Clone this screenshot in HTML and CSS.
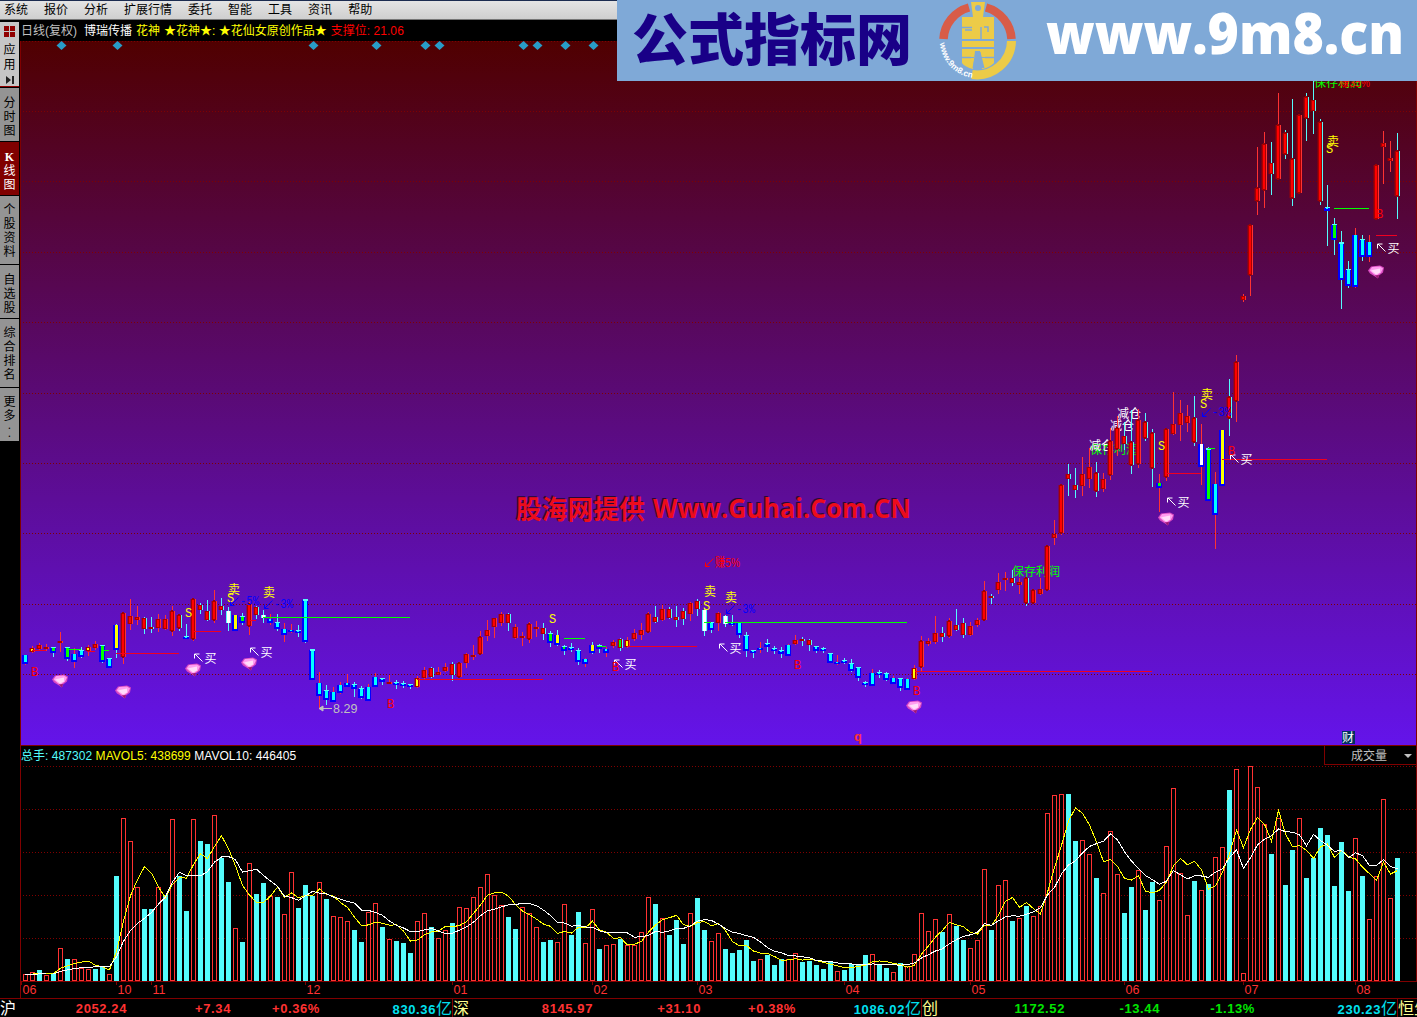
FILE: index.html
```
<!DOCTYPE html>
<html lang="zh-CN">
<head>
<meta charset="utf-8">
<title>博瑞传播 日线</title>
<link rel="stylesheet" href="styles.css">
</head>
<body>
<div class="menu">
<span>系统</span><span>报价</span><span>分析</span><span>扩展行情</span><span>委托</span><span>智能</span><span>工具</span><span>资讯</span><span>帮助</span>
</div>

<div class="work">
<div class="side">
<div class="tab apps">
<svg width="11" height="11"><path d="M0 0h5v5H0zM6 0h5v5H6zM0 6h5v5H0zM6 6h5v5H6z" fill="#900000"/></svg>
<span>应</span><span>用</span>
<svg class="next" width="8" height="8"><path d="M0 0L5 4L0 8zM6 0h2v8H6z" fill="#222"/></svg>
</div>
<div class="tab t3"><span>分</span><span>时</span><span>图</span></div>
<div class="tab t3 on"><span class="k">K</span><span>线</span><span>图</span></div>
<div class="tab t4"><span>个</span><span>股</span><span>资</span><span>料</span></div>
<div class="tab t3"><span>自</span><span>选</span><span>股</span></div>
<div class="tab t4"><span>综</span><span>合</span><span>排</span><span>名</span></div>
<div class="tab more"><span>更</span><span>多</span><i>.</i><i>.</i></div>
</div>

<div class="charts">
<div class="info"><span class="grey">日线(复权)</span><span class="white">博瑞传播</span><span class="yellow">花神</span><span class="yellow">★花神★: ★花仙女原创作品★</span><span class="red">支撑位: <b>21.06</b></span></div>
<svg class="price" id="price" width="1397" height="704" viewBox="20 41 1397 704"></svg>
<div class="volhead">
<div><span class="cyan">总手: 487302</span> <span class="yellow">MAVOL5: 438699</span> <span class="white">MAVOL10: 446405</span></div>
<div class="pick">成交量<svg width="9" height="5"><path d="M0 0h8L4 4z" fill="#c0c0c0"/></svg></div>
</div>
<svg class="vol" id="vol" width="1397" height="233" viewBox="20 765 1397 233"></svg>
</div>
</div>

<div class="status">
<div class="sec hu"><span class="name">沪</span><span>2052.24</span><span>+7.34</span><span>+0.36%</span><span class="sum">830.36<em>亿</em></span></div>
<div class="sec shen"><span class="name">深</span><span>8145.97</span><span>+31.10</span><span>+0.38%</span><span class="sum">1086.02<em>亿</em></span></div>
<div class="sec chuang"><span class="name">创</span><span>1172.52</span><span>-13.44</span><span>-1.13%</span><span class="sum">230.23<em>亿</em></span></div>
<div class="sec"><span class="name">恒生</span></div>
</div>

<div class="banner">
<svg width="800" height="81" viewBox="617 0 800 81">
<text class="brand" x="632" y="60" textLength="280">公式指标网</text>
<path d="M943.500 39A34.500 34.500 0 0 1 969 7.500" fill="none" stroke="#d85c48" stroke-width="8.500"/>
<path d="M986 7.500A34.500 34.500 0 0 1 1011.500 39" fill="none" stroke="#d85c48" stroke-width="8.500"/>
<path d="M1011.500 41A34.500 34.500 0 0 1 972 74.500" fill="none" stroke="#eccb48" stroke-width="9"/>
<path d="M971 2h14l-2 15h11v22h-32V17h11z" fill="#eccb48"/>
<path d="M962 41h32v6h-32zM962 49h32v8h-32zM962 58h32l0 5q-5 5-12 6l-2-18h-5l-2 18q-8-2-11-6z" fill="#eccb48"/>
<circle cx="978" cy="8" r="3" fill="#7fa9d7"/>
<path d="M962 27.500h10M972 30h-7M981 27v12M984 27h4v5M962 48h10M984 48h10M962 57.500h9M985 57.500h9" fill="none" stroke="#7fa9d7" stroke-width="1.500"/>
<path d="M972.500 68l3-16h5l4 16z" fill="#7fa9d7"/>
<path id="arc" d="M940 43A38 38 0 0 0 973 78" fill="none"/>
<text class="ring"><textPath href="#arc">www.9m8.cn</textPath></text>
<text class="site" x="1046" y="54" textLength="358" lengthAdjust="spacingAndGlyphs">www.9m8.cn</text>
</svg>
</div>
<script src="chart.js"></script>
</body>
</html>
```
FILE: styles.css
```
*{box-sizing: border-box;}
body{
	margin: 0;
	width: 1417px;
	height: 1017px;
	overflow: hidden;
	position: relative;
	background: #000;
	font: 12px/14px "Liberation Sans", "Noto Sans CJK SC", sans-serif;
}
.menu{
	height: 20px;
	display: flex;
	gap: 16px;
	padding: 2px 0 0 4px;
	border-top: 1px solid #1c2c50;
	border-bottom: 1px solid #777;
	background: linear-gradient(#e4e4e4, #cfcfcf);
	color: #000;
}
.work{
	height: 978px;
	display: flex;
}
.side{
	width: 20px;
	padding-top: 2px;
}
.tab{
	width: 19px;
	margin-bottom: 1px;
	background: #949494;
	display: flex;
	flex-direction: column;
	align-items: center;
	color: #000;
	line-height: 14px;
}
.tab i{
	font-style: normal;
	line-height: 8px;
}
.apps{
	height: 65px;
	background: #c6c6c6;
	border-bottom: 1px solid #900000;
	padding-top: 4px;
}
.apps svg{margin-bottom: 6px; flex: none;}
.apps span{line-height: 15px;}
.apps .next{margin-top: 3px;}
.t3{height: 53px; padding-top: 8px;}
.t4{height: 68px; padding-top: 7px;}
.more{height: 53px; padding-top: 7px;}
.more i{margin-top: -2px; margin-bottom: 2px;}
.on{background: #800000; color: #fff;}
.k{font-family: "Liberation Serif", serif; font-weight: bold;}
.charts{
	width: 1397px;
	border-top: 1px solid #000;
}
.info{
	height: 20px;
	padding: 3px 0 0 1px;
	display: flex;
	white-space: nowrap;
}
.info span{margin-right: 4px;}
.info .grey{width: 59px;}
.info b{font-weight: normal; letter-spacing: .1px;}
.price, .vol{display: block;}
.grey{color: #c0c0c0;}
.white{color: #fff;}
.yellow{color: #ff0;}
.red{color: #f00;}
.cyan{color: #54fcfc;}
.volhead{
	height: 20px;
	display: flex;
	justify-content: space-between;
	border-top: 1px solid #800000;
	border-left: 1px solid #800000;
	line-height: 20px;
	letter-spacing: .05px;
}
.pick{
	width: 93px;
	height: 19px;
	padding: 2px 3px 0 26px;
	display: flex;
	align-items: center;
	justify-content: space-between;
	border: solid #800000;
	border-width: 0 1px 1px 1px;
	color: #c0c0c0;
}
.status{
	height: 19px;
	border-top: 1px solid #800000;
	display: flex;
	font-weight: bold;
	font-size: 13px;
	line-height: 20px;
	letter-spacing: .6px;
	color: #ff3232;
	white-space: nowrap;
}
.sec{
	flex: none;
	display: grid;
	text-align: right;
	border-right: 1px solid #800000;
}
.hu{width: 453px; grid-template-columns: 16px 111px 104px 89px 132px;}
.shen{width: 469px; grid-template-columns: 16px 124px 108px 95px 125px;}
.chuang{width: 476px; grid-template-columns: 16px 127px 95px 95px 142px; color: #00e600;}
.name, .status em{
	font-weight: normal;
	font-style: normal;
	font-size: 16px;
	line-height: 19px;
	letter-spacing: 0;
	color: #ffff90;
}
.hu .name{color: #fff;}
.status em{color: #00e0f0;}
.sum{color: #00e0f0;}
.banner{
	position: absolute;
	left: 617px;
	top: 0;
	width: 800px;
	height: 81px;
	background: #7fa9d7;
}
.brand{
	font: 900 56px "Noto Sans CJK SC", sans-serif;
	fill: #190087;
}
.site{
	font: 800 56px "Open Sans", sans-serif;
	fill: #fff;
}
.ring{
	font: bold 8.5px "Liberation Sans", sans-serif;
	fill: #fff;
}

/* chart svg */
.grid{stroke: #800000; stroke-dasharray: 1 2;}
.frame{stroke: #800000; fill: none;}
.ma{fill: none; stroke-width: 1;}
.month{font-size: 12.5px;}
.note{font-size: 12px;}
.sig{font: 12px "Liberation Mono", monospace;}
.heavy{font: bold 13px "Liberation Mono", monospace;}
.mark{font: bold 26px "Open Sans", "Noto Sans CJK SC", sans-serif;}
```
FILE: chart.js
```
var STEP=7, LEFT=23;
var RED='#ff3232', CYAN='#54fcfc';

// candles: type, body top, body bottom, high, low
// r/c red body (red/cyan wick), b/d blue body (cyan/red wick), y/o yellow, g/j/h green, w/v white
var k='d655,664,655,665 o648,652,646,653 r645,649,643,650 r647,649,644,651 g648,653,647,657 o641,643,632,652 g648,659,647,661 d654,662,648,668 b651,657,647,658 o647,651,645,656 '+
'r644,648,641,650 g646,662,645,663 b659,668,659,668 y625,650,624,658 r613,657,612,664 r616,624,599,630 r617,620,606,625 c618,629,617,634 c627,629,617,633 r619,628,614,632 '+
'r619,629,615,630 r611,631,606,636 c615,628,614,631 b637,638,624,638 r599,639,599,641 c605,610,603,614 c611,620,600,621 r601,620,590,623 c606,610,598,615 w611,623,607,631 '+
'y615,631,615,631 g617,623,613,625 r604,626,602,635 c607,615,606,619 w615,618,610,623 d619,623,614,625 b623,629,614,631 d629,635,623,642 d630,632,624,633 b631,633,625,637 '+
'b600,642,600,643 b650,680,650,680 d683,696,672,709 b691,700,685,705 d692,702,687,702 d685,693,682,694 d683,687,674,687 b685,689,682,697 b689,698,686,699 d687,701,684,701 '+
'd677,687,673,687 b679,682,678,685 r682,684,675,684 b683,685,680,689 b684,686,681,688 b685,687,684,689 o678,687,676,688 r670,678,667,679 c668,677,667,678 r672,675,667,675 '+
'r667,671,663,672 c664,675,662,681 r663,677,663,678 r654,663,653,668 r655,657,645,660 r637,654,631,654 r630,636,620,641 r618,627,618,638 r614,623,612,626 c614,623,613,631 '+
'r627,638,624,639 r636,637,632,646 r624,639,622,643 r627,629,621,637 c628,634,623,640 g634,643,631,647 y635,645,630,646 g647,651,645,655 b648,650,643,652 b651,662,648,665 '+
'd659,664,658,667 y645,653,642,654 g646,649,644,653 d649,653,647,657 r642,646,640,648 h639,648,638,651 o640,647,637,648 r633,639,629,641 r630,635,623,640 r614,632,612,633 '+
'c617,622,606,623 r609,620,605,621 c609,618,607,619 c617,620,606,627 c611,619,608,625 r603,614,602,621 c601,609,599,616 w610,631,608,636 b623,630,622,633 r613,623,612,631 '+
'w616,624,615,627 b623,625,615,626 b623,635,623,638 b636,651,632,657 b651,653,650,658 d648,650,642,653 b644,647,639,652 b649,650,646,654 b651,654,647,658 d645,656,644,656 '+
'r640,644,635,645 c639,641,637,646 c640,645,639,651 b647,651,646,653 b649,651,647,653 b654,663,653,663 d662,663,655,665 b661,663,658,664 b664,671,659,672 b668,678,667,681 '+
'b683,685,681,687 d673,686,669,686 b673,675,670,678 b674,680,672,681 d678,684,676,684 b679,688,678,691 d679,690,678,690 o668,679,665,680 r641,667,636,671 r641,644,638,646 '+
'r633,642,616,644 c633,637,627,642 r621,636,618,638 c625,630,609,631 c623,635,618,638 r626,635,622,636 r620,625,618,627 r591,620,581,621 c596,598,594,604 r582,590,573,594 '+
'r578,579,572,591 c578,583,570,586 r582,585,578,594 c578,603,577,606 r590,603,589,604 r589,594,578,595 r546,590,545,590 r534,538,520,545 r485,533,485,535 c474,479,464,496 '+
'c485,490,468,498 r474,486,457,496 r467,479,448,488 c473,491,462,497 r479,489,473,492 r441,475,428,480 r428,449,416,456 c436,444,422,450 c442,465,410,474 r420,464,409,468 '+
'c422,438,413,441 c433,468,429,487 j483,488,474,512 r429,477,429,481 r424,434,392,435 r413,425,400,441 r416,423,405,432 c418,442,396,446 v444,467,424,485 g449,501,447,501 '+
'd484,515,472,549 y430,486,430,486 c397,418,379,436 r362,401,355,422 r296,300,294,302 r225,275,225,296 r188,201,147,215 r144,190,132,208 c163,174,142,195 r125,179,93,179 '+
'c133,154,130,159 c159,198,99,206 r115,193,115,193 c97,118,93,141 c100,111,81,134 c122,201,119,205 b208,211,185,246 g225,240,218,255 b243,280,231,309 b270,286,261,288 '+
'd235,287,228,288 b240,257,235,261 d242,257,235,262 r165,219,165,219 r143,147,131,184 r158,161,141,172 c151,196,133,219';

// volumes, a trailing + is an up day
var v='7+ 9+ 11 6+ 7 33+ 22 22+ 13+ 12+ 12 14 7+ 105 163+ 140+ 94+ 72 72 94+ 86 162+ 105 70 162+ 140 137 166+ 123 99 53+ 39 118+ 87 98 85+ 84 67+ 109+ 73 96 85 99+ 82 65+ 64+ 60+ 51 39 69+ 78+ 54 42+ 40 38 28 60+ 68+ 54 43+ 51+ 58 74+ 73+ 84+ 94+ 107+ '+
'86+ 76+ 64 52 74+ 68+ 54+ 39 41 39+ 77+ 46 69 38+ 72+ 32 36+ 37+ 42 36+ 36+ 49+ 84+ 77 63+ 46 61 37 68+ 83 51 40+ 48+ 32 28 31 41 20 22+ 26 16 22 22+ 28+ 19 20 16 12 20 10+ 11 17 17 26 27+ 16 13 9+ 18 15+ 27+ 68+ 50+ 62+ 49 '+
'67+ 55 41 33+ 41+ 112+ 51 96+ 101+ 60 63+ 75 65+ 75+ 168+ 186+ 187+ 187 140 141+ 127+ 103 88+ 150+ 107+ 68 94 111+ 71 99 81+ 135+ 193+ 108+ 66+ 100 91+ 97 124+ 134+ 191 212+ 8+ 215+ 194+ 157+ 127 163+ 96 131 163+ 103 123 153 146 95 139 90 143+ 105 62+ 105+ 182+ 83+ 123';

function rect(x,y,w,h,fill,more){
	return '<rect x="'+x+'" y="'+y+'" width="'+w+'" height="'+h+'" fill="'+fill+'" '+(more||'')+'/>';
}
function line(x1,y1,x2,y2,c){
	return '<path d="M'+x1+' '+y1+'L'+x2+' '+y2+'" stroke="'+c+'" fill="none"/>';
}
function text(x,y,s,c,cls,len){
	return '<text x="'+x+'" y="'+y+'" fill="'+c+'" class="'+(cls||'note')+'"'+(len?' textLength="'+len+'" lengthAdjust="spacingAndGlyphs"':'')+'>'+s+'</text>';
}
function grid(ys){
	return ys.map(function(y){
		return '<path class="grid" d="M23 '+(y+.5)+'H1416"/>';
	}).join('');
}

var body={r:'#f00',c:'#f00',b:'#00ffff',d:'#00ffff',y:'#ff0',o:'#ff0',g:'#0f0',j:'#0f0',h:'#0f0',w:'#fff',v:'#fff'};
function candle(s,i){
	var t=s[0], n=s.slice(1).split(',').map(Number);
	var x=LEFT+STEP*i, h=Math.max(n[1]-n[0],2);
	var wick='rdovj'.indexOf(t)>=0?RED:CYAN;
	var out=rect(x+2,n[2],1,Math.max(n[3]-n[2],1),wick);
	if('rcoh'.indexOf(t)>=0){
		out+=rect(x+4,n[0],1,h,wick);
		out+=rect(x-.4,n[0],4.4,h,'#a80000');
		if(h>12) out+=rect(x+1,n[0]-1,2,h+2,'#a00000');
		out+=rect(x+1,n[0]+1,2,Math.max(h-2,0),t=='o'||t=='h'?body[t]:'#f00');
	}else if(t=='w'){
		out+=rect(x,n[0],5,h,CYAN)+rect(x+1,n[0],3,h,'#fff');
	}else{
		out+=rect(x-1,n[0],6,h,'#0000ff');
		out+=rect(x+1,n[0],h>4?3:2,Math.max(h-2,1),body[t]);
		if(wick==CYAN&&t!='y') out+=rect(x,n[0]-1,5,h>20?2:1,CYAN);
	}
	return out;
}

////// price //////
var p='<defs><linearGradient id="sky" x1="0" y1="0" x2="0" y2="1"><stop offset="0" stop-color="#500000"/><stop offset="1" stop-color="#6414ea"/></linearGradient>'+
'<g id="gem"><path d="M3 1L12 0L16 2L15 7L11 10L10 13L7 11L2 8L0 5z" fill="#d848c0"/><path d="M4 1.500L12 1L15 3L13 7L9 10L6 9L1.500 5z" fill="#ff9cf0"/><path d="M3 5L7 4L12 3L12 7L8 9z" fill="#ffdcfa"/><path d="M7 10l4-.5l-1 3.500z" fill="#981870"/></g>'+
'<path id="up" d="M0 5V.5H5M.500 .500L8 8" fill="none" stroke="#fff"/>'+
'<path id="down" d="M8 0L0 8M0 4V8H4" fill="none"/></defs>';
p+=rect(20,41,1397,704,'url(#sky)')+grid([41,111,181,252,322,393,463,533,604,674]);
p+='<path class="frame" d="M20.500 41V745M1416.500 41V745"/>';

[61,117,313,376,425,439,523,537,565,593].forEach(function(x){
	p+='<path d="M'+(x-4.5)+' 45.500l5-4.500l5 4.500l-5 4.500z" fill="#289cc8"/>';
});

// profit / reduce labels go under the candles
p+=text(1012,576,'保存利润','#0f0','note',48)+text(1090,454,'保存利润','#0f0','note',48);
p+=text(1314,87,'保存利润','#0f0','note',48)+text(1339,87,'赚35%','#f00','note',31);
p+=text(1117,418,'减仓','#fff')+text(1110,430,'减仓','#fff')+text(1089,450,'减仓','#fff');
p+=k.split(' ').map(candle).join('');

// support lines in red, pressure lines in green
[[32,46,650],[87,95,651],[116,179,653],[194,221,631],[250,256,620],[417,543,679],[627,697,646],[915,1152,671],[1166,1201,473],[1222,1327,459],[1376,1397,235]].forEach(function(a){
	p+=line(a[0],a[2]+.5,a[1],a[2]+.5,'#f00020');
});
[[67,81,649],[102,109,650],[263,410,617],[564,585,638],[597,606,646],[704,711,622],[725,907,622],[1208,1215,448],[1334,1369,208]].forEach(function(a){
	p+=line(a[0],a[2]+.5,a[1],a[2]+.5,'#0f0');
});
[[52,675],[115,686],[185,664],[241,658],[906,701],[1158,513],[1368,266]].forEach(function(a){
	p+='<use href="#gem" x="'+a[0]+'" y="'+(a[1]-.5)+'"/>';
});
[[194,653],[250,647],[614,659],[719,643],[1167,497],[1230,454],[1377,243]].forEach(function(a){
	p+='<use href="#up" x="'+(a[0]+.5)+'" y="'+(a[1]+.5)+'"/>'+text(a[0]+10.5,a[1]+10,'买','#fff');
});
[[228,593],[263,596],[704,595],[725,601],[1201,398],[1327,145]].forEach(function(a){
	p+=text(a[0],a[1]+1,'卖','#ff0');
});
[[185,617],[227,602],[549,623],[703,610],[1158,450],[1200,408],[1326,153]].forEach(function(a){
	p+=text(a[0],a[1],'S','#ff0','sig');
});
[[31,676],[387,708],[612,671],[794,669],[913,695],[1228,455],[1376,218]].forEach(function(a){
	p+=text(a[0],a[1],'B','#f00','sig');
});
[[230,597,'-5%'],[264,600,'-3%'],[726,605,'-3%'],[1202,408,'-3%']].forEach(function(a){
	p+='<use href="#down" x="'+(a[0]+.5)+'" y="'+(a[1]+.5)+'" stroke="#00f"/>'+text(a[0]+10,a[1]+8,a[2],'#00f','sig',19);
});
p+='<use href="#down" x="705.500" y="558.500" stroke="#f00"/>'+text(715,567,'赚5%','#f00','note',25);
p+='<path d="M320 708.500H332M323 706v5l-4-2.500z" stroke="#c0c0c0" fill="#c0c0c0"/>'+text(333,713,'8.29','#c0c0c0','month');
p+=text(854,741,'q','#ff3232','heavy')+rect(1342,731,13,13,'#003060')+text(1342,742,'财','#fff');
p+=text(515,518,'股海网提供','#280838','mark',129)+text(652,517,'Www.Guhai.Com.CN','#280838','mark',258);
p+=text(516,519,'股海网提供','#ec0c1c','mark',129)+text(653,518,'Www.Guhai.Com.CN','#ec0c1c','mark',258);
document.getElementById('price').innerHTML=p;

////// volume //////
var vol=v.split(' '), num=vol.map(parseFloat), base=981;
var q=grid([766,809,852,895,938]);
vol.forEach(function(s,i){
	var x=LEFT+STEP*i, h=num[i];
	if(s.indexOf('+')>0) q+=rect(x+.5,base-h+.5,4,h-1,'#000','stroke="'+RED+'"');
	else q+=rect(x,base-h,5,h,CYAN);
});
function average(n,c){
	var pts=num.map(function(a,i){
		var sum=0;
		for(var j=i-n+1;j<=i;j++) sum+=j<0?7:num[j];
		return (LEFT+STEP*i+2.5)+','+(base-sum/n+.5);
	});
	return '<polyline class="ma" stroke="'+c+'" shape-rendering="crispEdges" points="'+pts.join(' ')+'"/>';
}
q+=average(5,'#ff0')+average(10,'#fff');
q+='<path class="frame" d="M20.500 765V998M1416.500 765V981M20 981.500H1417"/>';
[[21,'06'],[116,'10'],[151,'11'],[305,'12'],[452,'01'],[592,'02'],[697,'03'],[844,'04'],[970,'05'],[1124,'06'],[1243,'07'],[1355,'08']].forEach(function(a){
	q+=line(a[0]+.5,981,a[0]+.5,985,'#800000')+text(a[0]+1.5,994,a[1],RED,'month');
});
document.getElementById('vol').innerHTML=q;
```
